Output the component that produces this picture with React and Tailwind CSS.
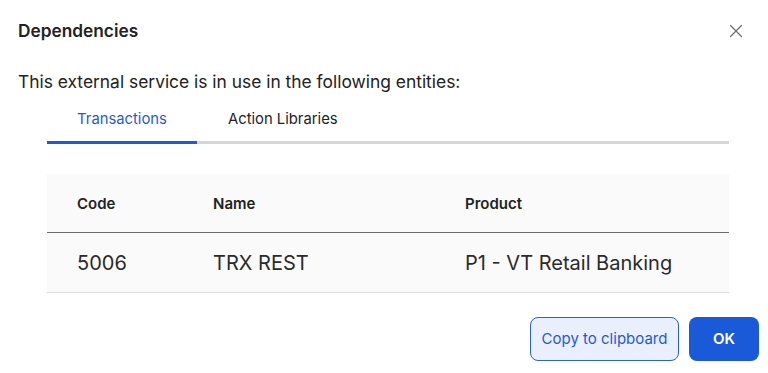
export default function App() {
  return (
    <div className="w-[768px] h-[373px] bg-white overflow-hidden text-[#222222]" style={{ fontFamily: "Inter, 'Noto Sans', sans-serif" }}>
      <div className="flex items-center justify-between pl-[18px] pr-[25px] pt-[20px] h-[42px]">
        <h1 className="text-[17.3px] leading-[22px] font-semibold text-[#222222]">Dependencies</h1>
        <svg width="14" height="14" viewBox="0 0 14 14" className="text-[#6f6f6f]">
          <path d="M1.5 1.5 L12.5 12.5 M12.5 1.5 L1.5 12.5" stroke="currentColor" strokeWidth="1.3" strokeLinecap="round" />
        </svg>
      </div>
      <p className="pl-[18px] mt-[28px] text-[17.4px] leading-[24px] text-[#222222]">This external service is in use in the following entities:</p>
      <div className="ml-[47px] mr-[39px]">
        <div className="relative flex pt-[15px]">
          <div className="w-[150px] flex justify-center pb-[12px] text-[14.8px] leading-[20px] text-[#1f5bd6]">Transactions</div>
          <div className="pl-[31px] pb-[12px] text-[14.8px] leading-[20px] text-[#222222]">Action Libraries</div>
        </div>
        <div className="relative h-[3px] bg-[#d6d6d6]">
          <div className="absolute left-0 top-0 h-[3px] w-[150px] bg-[#1f5bd6]"></div>
        </div>
        <div className="mt-[30px] bg-[#fafafa]">
          <div className="grid grid-cols-[136px_252px_1fr] h-[59px] pt-[2px] items-center border-b border-[#6b6b6b] text-[15px] font-semibold text-[#222222]">
            <div className="pl-[30px]">Code</div>
            <div className="pl-[30px]">Name</div>
            <div className="pl-[30px]">Product</div>
          </div>
          <div className="grid grid-cols-[136px_252px_1fr] h-[60px] pt-[1px] items-center border-b border-[#dddddd] text-[20px] text-[#2b2b2b]">
            <div className="pl-[30px]">5006</div>
            <div className="pl-[30px]">TRX REST</div>
            <div className="pl-[30px]">P1 - VT Retail Banking</div>
          </div>
        </div>
      </div>
      <div className="flex justify-end gap-[10px] pr-[9px] mt-[24px]">
        <button className="h-[44px] w-[149px] rounded-[8px] border border-[#2a62d9] bg-[#e9effc] text-[15px] text-[#1f5bd6]">Copy to clipboard</button>
        <button className="h-[44px] w-[70px] rounded-[8px] bg-[#1a5ad8] text-[15px] font-semibold text-white">OK</button>
      </div>
    </div>
  );
}
